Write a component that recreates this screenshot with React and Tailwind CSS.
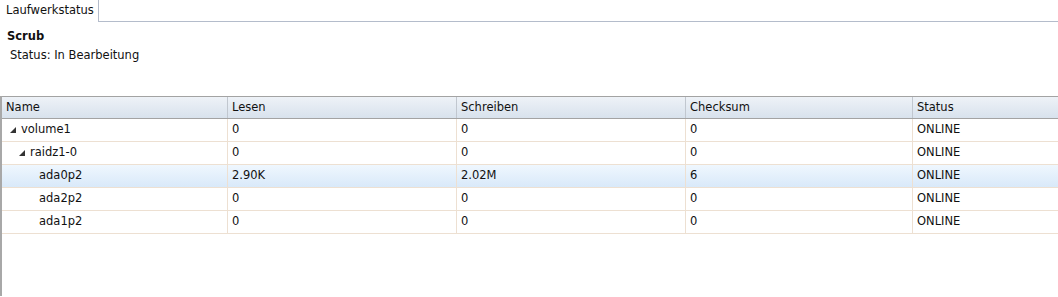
const columns = [
  { key: "name", label: "Name", width: "w-[226px]" },
  { key: "lesen", label: "Lesen", width: "w-[229px]" },
  { key: "schreiben", label: "Schreiben", width: "w-[229px]" },
  { key: "checksum", label: "Checksum", width: "w-[227px]" },
  { key: "status", label: "Status", width: "flex-1" },
];

const rows = [
  { name: "volume1", depth: 0, expanded: true, lesen: "0", schreiben: "0", checksum: "0", status: "ONLINE" },
  { name: "raidz1-0", depth: 1, expanded: true, lesen: "0", schreiben: "0", checksum: "0", status: "ONLINE" },
  { name: "ada0p2", depth: 2, lesen: "2.90K", schreiben: "2.02M", checksum: "6", status: "ONLINE", selected: true },
  { name: "ada2p2", depth: 2, lesen: "0", schreiben: "0", checksum: "0", status: "ONLINE" },
  { name: "ada1p2", depth: 2, lesen: "0", schreiben: "0", checksum: "0", status: "ONLINE" },
];

const indents = ["pl-[8px]", "pl-[17px]", "pl-[37px]"];

function Arrow() {
  return (
    <svg width="6" height="6" viewBox="0 0 6 6" className="mr-[5px] shrink-0">
      <polygon points="6,0 6,6 0,6" fill="#333" />
    </svg>
  );
}

export default function App() {
  return (
    <div className="w-[1058px] h-[297px] bg-white overflow-hidden text-[11.5px] text-[#111] font-['DejaVu_Sans',sans-serif]">
      <div className="flex h-[22px]">
        <div className="w-[99px] border-r border-[#b4bccb] bg-white pl-[6px] pt-[4px] leading-[13px]">
          Laufwerkstatus
        </div>
        <div className="flex-1 border-b border-[#b4bccb]"></div>
      </div>

      <div className="pl-[7px] pt-[8px] font-bold leading-[13px]">Scrub</div>
      <div className="pl-[10px] pt-[6px] leading-[13px]">Status: In Bearbeitung</div>

      <div className="mt-[34px] h-[200px] border-l-2 border-[#a8a8a8]">
        <div className="flex h-[23px] border-t border-b border-[#a3a3a3] bg-gradient-to-b from-[#eef2f7] to-[#d8e2ed]">
          {columns.map((col, i) => (
            <div
              key={col.key}
              className={`${col.width} flex items-center px-[4px] ${i < columns.length - 1 ? "border-r border-[#c1c7cf]" : ""}`}
            >
              {col.label}
            </div>
          ))}
        </div>

        {rows.map((row) => (
          <div
            key={row.name}
            className={`flex h-[23px] border-b border-[#ede0d2] ${row.selected ? "bg-gradient-to-b from-[#eff7fe] to-[#d9e9f9]" : "bg-white"}`}
          >
            <div className={`w-[226px] flex items-center border-r border-[#ede0d2] ${indents[row.depth]}`}>
              {row.expanded && <Arrow />}
              {row.name}
            </div>
            <div className="w-[229px] flex items-center px-[4px] border-r border-[#ede0d2]">{row.lesen}</div>
            <div className="w-[229px] flex items-center px-[4px] border-r border-[#ede0d2]">{row.schreiben}</div>
            <div className="w-[227px] flex items-center px-[4px] border-r border-[#ede0d2]">{row.checksum}</div>
            <div className="flex-1 flex items-center px-[4px]">{row.status}</div>
          </div>
        ))}
      </div>
    </div>
  );
}
